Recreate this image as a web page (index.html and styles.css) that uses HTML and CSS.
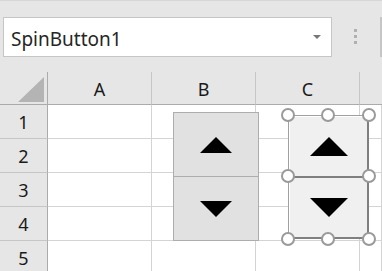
FILE: index.html
```html
<!DOCTYPE html>
<html lang="en">
<head>
    <meta charset="UTF-8">
    <title>SpinButton1</title>
    <link rel="stylesheet" href="styles.css">
</head>
<body>
    <div class="topbar">
        <div class="namebox">
            <span class="name">SpinButton1</span>
            <span class="caret"></span>
        </div>
        <div class="grip"><i></i><i></i><i></i></div>
        <div class="formula"></div>
    </div>

    <div class="sheet">
        <div class="grid">
            <div class="corner"><span class="tri"></span></div>
            <div class="colhead">A</div>
            <div class="colhead">B</div>
            <div class="colhead">C</div>
            <div class="colhead last"></div>

            <div class="rowhead">1</div><div class="cell"></div><div class="cell"></div><div class="cell"></div><div class="cell"></div>
            <div class="rowhead">2</div><div class="cell"></div><div class="cell"></div><div class="cell"></div><div class="cell"></div>
            <div class="rowhead">3</div><div class="cell"></div><div class="cell"></div><div class="cell"></div><div class="cell"></div>
            <div class="rowhead">4</div><div class="cell"></div><div class="cell"></div><div class="cell"></div><div class="cell"></div>
            <div class="rowhead">5</div><div class="cell"></div><div class="cell"></div><div class="cell"></div><div class="cell"></div>
        </div>

        <!-- spin button controls sit on the sheet canvas -->
        <div class="spin spin1">
            <div class="half"><span class="arrow up"></span></div>
            <div class="half"><span class="arrow down"></span></div>
        </div>

        <div class="spin spin2 selected">
            <div class="half"><span class="arrow up"></span></div>
            <div class="half"><span class="arrow down"></span></div>
            <span class="handle h-tl"></span>
            <span class="handle h-tm"></span>
            <span class="handle h-tr"></span>
            <span class="handle h-ml"></span>
            <span class="handle h-mr"></span>
            <span class="handle h-bl"></span>
            <span class="handle h-bm"></span>
            <span class="handle h-br"></span>
        </div>
    </div>
</body>
</html>
```

FILE: styles.css
```css
body {
    margin: 0;
    width: 382px;
    height: 271px;
    overflow: hidden;
    background: #e6e6e6;
    font-family: "Noto Sans", "Open Sans", sans-serif;
    color: #1a1a1a;
}
.topbar {
    border-top: 1px solid #d6d6d6;
    display: flex;
    align-items: flex-start;
    padding-top: 16px;
    box-sizing: border-box;
    height: 72px;
}
.namebox {
    margin-left: 3px;
    width: 330px;
    height: 40px;
    box-sizing: border-box;
    background: #fff;
    border: 1px solid #c6c6c6;
    display: flex;
    align-items: center;
    justify-content: space-between;
    padding: 3px 10px 0 7px;
}
.name {
    font-size: 19px;
    color: #262626;
}
.caret {
    width: 0;
    height: 0;
    border-left: 4px solid transparent;
    border-right: 4px solid transparent;
    border-top: 4px solid #777;
    margin-top: -3px;
}
.grip {
    width: 46px;
    display: flex;
    flex-direction: column;
    align-items: center;
    gap: 3px;
    padding-top: 12px;
}
.grip i {
    display: block;
    width: 3px;
    height: 3px;
    background: #b0b0b0;
}
.formula {
    flex: 1;
    height: 40px;
    box-sizing: border-box;
    background: #fff;
    border: 1px solid #c6c6c6;
    margin-left: 2px;
}
.sheet {
    position: relative;
}
.grid {
    display: grid;
    grid-template-columns: 48px 104px 104px 104px 1fr;
    grid-template-rows: 33px 34px 34px 34px 34px 34px;
}
.corner, .colhead, .rowhead {
    background: #e6e6e6;
    display: flex;
    align-items: center;
    justify-content: center;
    font-size: 18px;
    box-sizing: border-box;
}
.corner {
    border-right: 1px solid #ababab;
    border-bottom: 1px solid #ababab;
    position: relative;
}
.tri {
    position: absolute;
    right: 3px;
    bottom: 2px;
    width: 0;
    height: 0;
    border-left: 26px solid transparent;
    border-bottom: 25px solid #b4b4b4;
}
.colhead {
    border-right: 1px solid #c6c6c6;
    border-bottom: 1px solid #ababab;
    padding-top: 1px;
}
.colhead.last {
    border-right: none;
}
.rowhead {
    border-right: 1px solid #ababab;
    border-bottom: 1px solid #c6c6c6;
    padding-top: 1px;
}
.cell {
    background: #fff;
    border-right: 1px solid #d4d4d4;
    border-bottom: 1px solid #d4d4d4;
}
.spin {
    position: absolute;
    display: flex;
    flex-direction: column;
}
.half {
    flex: 1;
    display: flex;
    align-items: center;
    justify-content: center;
    box-sizing: border-box;
}
.arrow {
    width: 0;
    height: 0;
}
.spin1 {
    left: 173px;
    top: 40px;
    width: 86px;
    height: 129px;
}
.spin1 .half {
    background: #e1e1e1;
    border: 1px solid #adadad;
}
.spin1 .half + .half {
    border-top: none;
}
.spin1 .arrow.up {
    border-left: 16px solid transparent;
    border-right: 16px solid transparent;
    border-bottom: 16px solid #000;
}
.spin1 .arrow.down {
    border-left: 16px solid transparent;
    border-right: 16px solid transparent;
    border-top: 16px solid #000;
}
.spin2 {
    left: 288px;
    top: 43px;
    width: 81px;
    height: 124px;
    box-sizing: border-box;
    border-top: 1px solid #a0a0a0;
    border-left: 1px solid #a0a0a0;
    border-right: 2px solid #7f7f7f;
    border-bottom: 2px solid #7f7f7f;
}
.spin2 .half {
    background: #f0f0f0;
    border-top: 1px solid #fff;
    border-left: 1px solid #fff;
}
.spin2 .half + .half {
    border-top: 2px solid #7f7f7f;
}
.spin2 .arrow.up {
    border-left: 19px solid transparent;
    border-right: 19px solid transparent;
    border-bottom: 19px solid #000;
}
.spin2 .arrow.down {
    border-left: 19px solid transparent;
    border-right: 19px solid transparent;
    border-top: 19px solid #000;
}
.handle {
    position: absolute;
    width: 10px;
    height: 10px;
    border: 2.5px solid #9a9a9a;
    border-radius: 50%;
    background: #fff;
}
.h-tl { left: -8px; top: -8px; }
.h-tm { left: 32px; top: -8px; }
.h-tr { right: -9px; top: -8px; }
.h-ml { left: -8px; top: 53px; }
.h-mr { right: -9px; top: 53px; }
.h-bl { left: -8px; bottom: -9px; }
.h-bm { left: 32px; bottom: -9px; }
.h-br { right: -9px; bottom: -9px; }
```
